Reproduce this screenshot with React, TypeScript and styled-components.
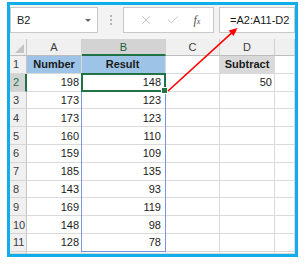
import React from 'react';
import styled, { createGlobalStyle, css } from 'styled-components';
import { X, Check } from 'lucide-react';

const GlobalStyle = createGlobalStyle`
  html, body {
    margin: 0;
    padding: 0;
    background: #fff;
  }
  body {
    font-family: "Liberation Sans", Arial, sans-serif;
    font-size: 11px;
    color: #1a1a1a;
  }
`;

const GREEN = '#217346';

const colA = ['Number', '198', '173', '173', '160', '159', '185', '143', '169', '148', '128'];
const colB = ['Result', '148', '123', '123', '110', '109', '135', '93', '119', '98', '78'];

type Place = { $r: number; $c: number };

const place = css<Place>`
  grid-row: ${(p) => p.$r};
  grid-column: ${(p) => p.$c};
`;

export default function App() {
  const rows = Array.from({ length: 12 }, (_, i) => i + 1);
  return (
    <>
      <GlobalStyle />
      <Frame>
        <Toolbar>
          <NameBox>
            B2
            <Caret />
          </NameBox>
          <Dots>
            <i />
            <i />
            <i />
          </Dots>
          <FuncBox>
            <X size={14} strokeWidth={1.4} color="#bdbdbd" />
            <Check size={14} strokeWidth={1.4} color="#bdbdbd" />
            <Fx>
              f<sub>x</sub>
            </Fx>
          </FuncBox>
          <FormulaBox>=A2:A11-D2</FormulaBox>
        </Toolbar>

        <Sheet>
          <Corner $r={1} $c={1}>
            <CornerMark />
          </Corner>
          {['A', 'B', 'C', 'D', ''].map((l, i) => (
            <ColHead key={i} $r={1} $c={i + 2} $active={l === 'B'}>
              {l}
            </ColHead>
          ))}

          {rows.map((row) => {
            const r = row + 1;
            const header = row === 1;
            const align = header ? 'center' : 'right';
            const d = row === 1 ? 'Subtract' : row === 2 ? '50' : '';
            return (
              <React.Fragment key={row}>
                <RowHead $r={r} $c={1} $active={row === 2}>
                  {row < 12 ? row : ''}
                </RowHead>
                <Cell $r={r} $c={2} $align={align} $bold={header} $bg={header ? '#9dc3e6' : undefined}>
                  {colA[row - 1]}
                </Cell>
                <Cell $r={r} $c={3} $align={align} $bold={header} $bg={header ? '#9dc3e6' : undefined} $pad={4}>
                  {colB[row - 1]}
                </Cell>
                <Cell $r={r} $c={4} />
                <Cell $r={r} $c={5} $align={align} $bold={header} $bg={header ? '#d9d9d9' : undefined}>
                  {d}
                </Cell>
                <Cell $r={r} $c={6} />
              </React.Fragment>
            );
          })}

          <SpillRange />
          <Selection>
            <Handle />
          </Selection>
        </Sheet>

        <Arrow width="285" height="100" viewBox="0 0 285 100">
          <line x1="158" y1="86" x2="221.5" y2="28.2" stroke="#ff0000" strokeWidth="1.6" />
          <polygon points="227.5,23 223.6,31 218.6,25.6" fill="#ff0000" />
        </Arrow>
      </Frame>
    </>
  );
}

const Frame = styled.div`
  position: relative;
  box-sizing: border-box;
  margin: 2px 0 0 7px;
  width: 291px;
  height: 255px;
  border: 3px solid #10aee8;
  background: #f3f3f3;
  display: flex;
  flex-direction: column;
  overflow: hidden;
`;

const Toolbar = styled.div`
  display: flex;
  align-items: flex-start;
  height: 34px;
  padding-top: 2px;
  box-sizing: border-box;
  flex: none;
`;

const Box = styled.div`
  box-sizing: border-box;
  height: 26px;
  background: #fff;
  border: 1px solid #c8c8c8;
  display: flex;
  align-items: center;
`;

const NameBox = styled(Box)`
  width: 88px;
  padding-left: 6px;
  position: relative;
  color: #222;
`;

const Caret = styled.span`
  position: absolute;
  right: 6px;
  top: 11px;
  width: 0;
  height: 0;
  border-left: 3px solid transparent;
  border-right: 3px solid transparent;
  border-top: 3px solid #6a6a6a;
`;

const Dots = styled.div`
  width: 25px;
  height: 26px;
  display: flex;
  flex-direction: column;
  align-items: center;
  justify-content: center;
  gap: 2px;

  i {
    width: 2px;
    height: 2px;
    background: #b4b4b4;
  }
`;

const FuncBox = styled(Box)`
  width: 91px;
  justify-content: space-around;
  padding: 0 6px 0 8px;
`;

const Fx = styled.span`
  font-family: "Liberation Serif", "Times New Roman", serif;
  font-style: italic;
  font-size: 12px;
  color: #505050;

  sub {
    font-size: 8px;
    vertical-align: 0;
  }
`;

const FormulaBox = styled(Box)`
  flex: 1;
  margin-left: 5px;
  padding-left: 10px;
  color: #1a1a1a;
`;

const Sheet = styled.div`
  flex: 1;
  display: grid;
  grid-template-columns: 17px 55px 84px 54px 55px 1fr;
  grid-template-rows: 17px repeat(11, 17.8px) 1fr;
  background: #fff;
`;

const Corner = styled.div<Place>`
  ${place};
  position: relative;
  background: #f0f0f0;
  border-right: 1px solid #c6c6c6;
  border-bottom: 1px solid #bdbdbd;
`;

const CornerMark = styled.span`
  position: absolute;
  right: 2px;
  bottom: 2px;
  width: 0;
  height: 0;
  border-left: 9px solid transparent;
  border-bottom: 9px solid #c4c4c4;
`;

const ColHead = styled.div<Place & { $active?: boolean }>`
  ${place};
  box-sizing: border-box;
  display: flex;
  align-items: center;
  justify-content: center;
  background: ${(p) => (p.$active ? '#d3d3d3' : '#f0f0f0')};
  color: ${(p) => (p.$active ? '#1f5e3b' : '#3c3c3c')};
  border-right: 1px solid #d0d0d0;
  border-bottom: ${(p) => (p.$active ? `2px solid ${GREEN}` : '1px solid #bdbdbd')};
`;

const RowHead = styled.div<Place & { $active?: boolean }>`
  ${place};
  box-sizing: border-box;
  display: flex;
  align-items: center;
  padding-left: 3px;
  background: ${(p) => (p.$active ? '#d3d3d3' : '#f0f0f0')};
  color: ${(p) => (p.$active ? GREEN : '#3c3c3c')};
  border-right: ${(p) => (p.$active ? `2px solid ${GREEN}` : '1px solid #c6c6c6')};
  border-bottom: 1px solid #d6d6d6;
`;

const Cell = styled.div<
  Place & {
    $align?: 'left' | 'right' | 'center';
    $bold?: boolean;
    $bg?: string;
    $pad?: number;
  }
>`
  ${place};
  box-sizing: border-box;
  display: flex;
  align-items: center;
  justify-content: ${(p) =>
    p.$align === 'right' ? 'flex-end' : p.$align === 'center' ? 'center' : 'flex-start'};
  padding: 0 ${(p) => p.$pad ?? 2}px 0 2px;
  background: ${(p) => p.$bg ?? '#fff'};
  font-weight: ${(p) => (p.$bold ? 700 : 400)};
  border-right: 1px solid #dadada;
  border-bottom: 1px solid #dadada;
  white-space: nowrap;
`;

const SpillRange = styled.div`
  grid-column: 3;
  grid-row: 3 / 13;
  margin-left: -1px;
  border: 1px solid #7a97d6;
  pointer-events: none;
  z-index: 1;
`;

const Selection = styled.div`
  grid-column: 3;
  grid-row: 3;
  position: relative;
  margin: -1px 0 0 -1px;
  border: 2px solid ${GREEN};
  pointer-events: none;
  z-index: 2;
`;

const Handle = styled.span`
  position: absolute;
  right: -4px;
  bottom: -4px;
  width: 5px;
  height: 5px;
  background: ${GREEN};
  border: 1px solid #fff;
`;

const Arrow = styled.svg`
  position: absolute;
  left: 0;
  top: 0;
  z-index: 3;
  pointer-events: none;
`;
